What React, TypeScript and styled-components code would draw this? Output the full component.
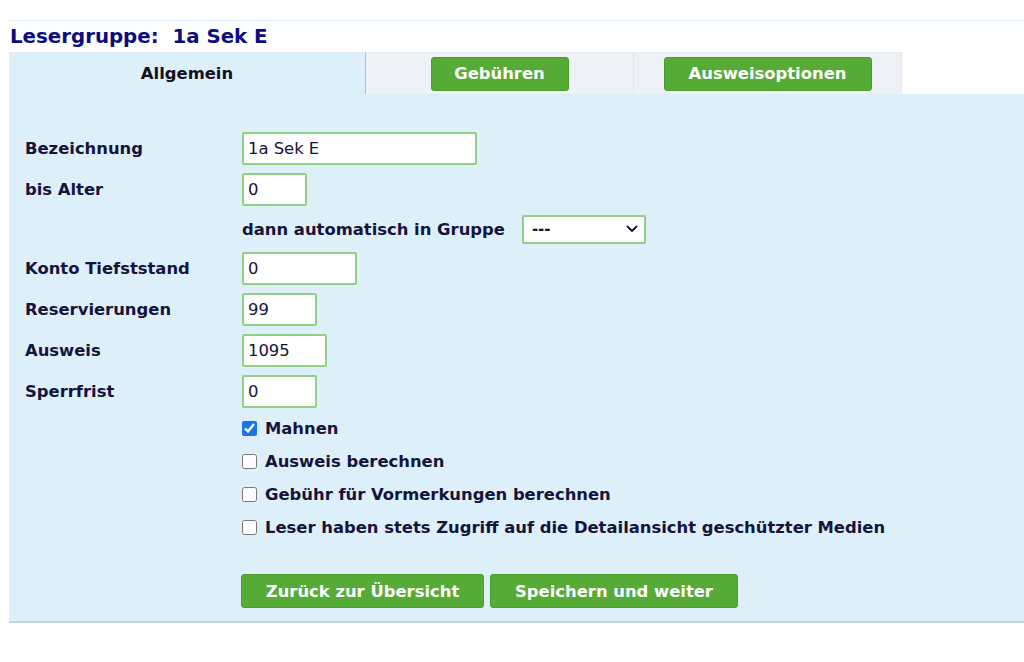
import React from "react";
import styled, { createGlobalStyle } from "styled-components";

const GlobalStyle = createGlobalStyle`
  html, body { margin: 0; padding: 0; background: #ffffff; }
  body { font-family: "DejaVu Sans", Verdana, sans-serif; }
`;

const Page = styled.div`
  padding-top: 20px;
  padding-left: 9px;
`;

const Frame = styled.div`
  border-top: 1px solid #dcebf7;
`;

const Title = styled.h1`
  margin: 0;
  height: 31px;
  padding-left: 1px;
  font-size: 19.8px;
  line-height: 31px;
  font-weight: bold;
  color: #0c0c80;
`;

const TabBar = styled.div`
  display: flex;
  height: 42px;
`;

const Tab = styled.div<{ $active?: boolean; $width: number; $border?: string }>`
  width: ${(p) => p.$width}px;
  display: flex;
  align-items: center;
  justify-content: center;
  background: ${(p) => (p.$active ? "#ddeff9" : "#eef2f7")};
  border-left: ${(p) => (p.$border ? `1px solid ${p.$border}` : "none")};
  border-top: ${(p) => (p.$active ? "none" : "1px solid #e6ecf3")};
  box-sizing: border-box;
  font-size: 16.4px;
  font-weight: bold;
  color: #111122;
`;

const TabEnd = styled.div`
  width: 1px;
  background: #e2e8f0;
`;

const GreenButton = styled.button<{ $width: number }>`
  width: ${(p) => p.$width}px;
  height: 34px;
  border: 1px solid #4c9d2e;
  border-radius: 3px;
  background: #55ab35;
  color: #ffffff;
  font-family: "DejaVu Sans", Verdana, sans-serif;
  font-size: 16.4px;
  font-weight: bold;
  padding: 0;
  cursor: pointer;
`;

const Panel = styled.div`
  background: #ddeff9;
  padding: 38px 15px 13px 16px;
  border-bottom: 2px solid #c9d3dc;
`;

const FormGrid = styled.div`
  display: grid;
  grid-template-columns: 217px 1fr;
  row-gap: 8px;
  align-items: center;
`;

const Label = styled.div`
  font-size: 16.4px;
  font-weight: bold;
  color: #14143c;
`;

const TextInput = styled.input<{ $width: number }>`
  width: ${(p) => p.$width}px;
  height: 33px;
  box-sizing: border-box;
  border: 2px solid #92d185;
  border-radius: 2px;
  background: #ffffff;
  padding: 0 4px;
  font-family: "DejaVu Sans", Verdana, sans-serif;
  font-size: 16.4px;
  color: #14143c;
  outline: none;
`;

const InlineRow = styled.div`
  display: flex;
  align-items: center;
  gap: 17px;
  height: 30px;
`;

const SelectBox = styled.div`
  position: relative;
  width: 124px;
  height: 29px;
  box-sizing: border-box;
  border: 2px solid #92d185;
  border-radius: 2px;
  background: #ffffff;
  display: flex;
  align-items: center;
  padding-left: 8px;
  font-size: 15px;
  font-weight: bold;
  color: #14143c;
`;

const Chevron = styled.svg`
  position: absolute;
  right: 6px;
  top: 8px;
`;

const CheckList = styled.div`
  display: flex;
  flex-direction: column;
  margin-left: 217px;
  margin-top: 4px;
`;

const CheckRow = styled.label`
  display: flex;
  align-items: center;
  gap: 8px;
  height: 33px;
  font-size: 16.4px;
  font-weight: bold;
  color: #14143c;
`;

const Check = styled.input`
  width: 15px;
  height: 15px;
  margin: 0;
  accent-color: #1a73e8;
`;

const Actions = styled.div`
  display: flex;
  gap: 6px;
  margin-left: 216px;
  margin-top: 30px;
`;

const rows = [
  { label: "Bezeichnung", value: "1a Sek E", width: 235 },
  { label: "bis Alter", value: "0", width: 65 },
];

const rows2 = [
  { label: "Konto Tiefststand", value: "0", width: 115 },
  { label: "Reservierungen", value: "99", width: 75 },
  { label: "Ausweis", value: "1095", width: 85 },
  { label: "Sperrfrist", value: "0", width: 75 },
];

const checks = [
  { label: "Mahnen", checked: true },
  { label: "Ausweis berechnen", checked: false },
  { label: "Gebühr für Vormerkungen berechnen", checked: false },
  { label: "Leser haben stets Zugriff auf die Detailansicht geschützter Medien", checked: false },
];

export default function App() {
  return (
    <>
      <GlobalStyle />
      <Page>
        <Frame>
          <Title>Lesergruppe:&nbsp; 1a Sek E</Title>
          <TabBar>
            <Tab $active $width={356}>Allgemein</Tab>
            <Tab $width={268} $border="#b9bec5">
              <GreenButton $width={138}>Gebühren</GreenButton>
            </Tab>
            <Tab $width={268} $border="#e0e6ee">
              <GreenButton $width={208}>Ausweisoptionen</GreenButton>
            </Tab>
            <TabEnd />
          </TabBar>
          <Panel>
            <FormGrid>
              {rows.map((r) => (
                <React.Fragment key={r.label}>
                  <Label>{r.label}</Label>
                  <div>
                    <TextInput $width={r.width} defaultValue={r.value} />
                  </div>
                </React.Fragment>
              ))}
              <div />
              <InlineRow>
                <Label>dann automatisch in Gruppe</Label>
                <SelectBox>
                  ---
                  <Chevron width="12" height="8" viewBox="0 0 12 8">
                    <path d="M1.5 1.5 L6 6 L10.5 1.5" fill="none" stroke="#14143c" strokeWidth="1.8" strokeLinecap="round" strokeLinejoin="round" />
                  </Chevron>
                </SelectBox>
              </InlineRow>
              {rows2.map((r) => (
                <React.Fragment key={r.label}>
                  <Label>{r.label}</Label>
                  <div>
                    <TextInput $width={r.width} defaultValue={r.value} />
                  </div>
                </React.Fragment>
              ))}
            </FormGrid>
            <CheckList>
              {checks.map((c) => (
                <CheckRow key={c.label}>
                  <Check type="checkbox" defaultChecked={c.checked} />
                  {c.label}
                </CheckRow>
              ))}
            </CheckList>
            <Actions>
              <GreenButton $width={243}>Zurück zur Übersicht</GreenButton>
              <GreenButton $width={248}>Speichern und weiter</GreenButton>
            </Actions>
          </Panel>
        </Frame>
      </Page>
    </>
  );
}
